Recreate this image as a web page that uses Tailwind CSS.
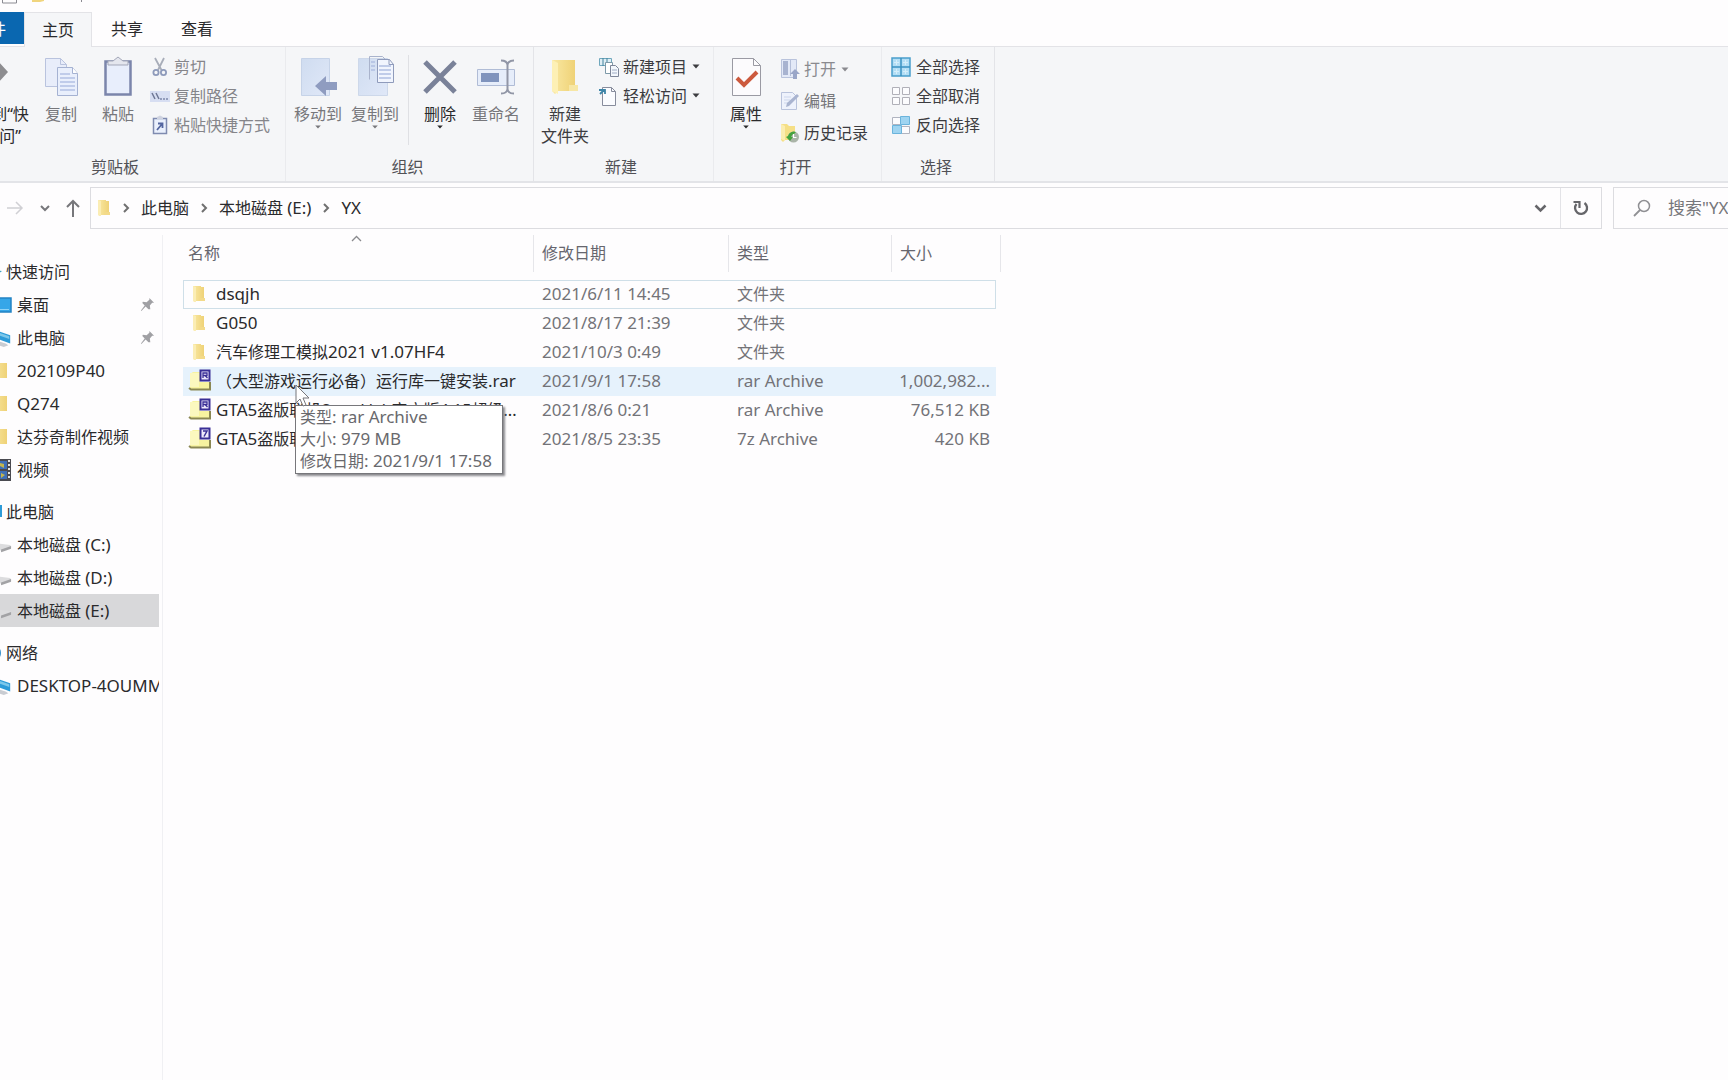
<!DOCTYPE html>
<html lang="zh-CN">
<head>
<meta charset="utf-8">
<meta name="viewport" content="width=device-width, initial-scale=1">
<title>YX</title>
<script src="https://cdn.jsdelivr.net/npm/@tailwindcss/browser@4"></script>
</head>
<body class="bg-[#fefdfe]">
<svg class="absolute size-0" aria-hidden="true">
  <defs>
    <linearGradient id="gFolder" x1="0" x2="1"><stop offset="0" stop-color="#f9e8a2"/><stop offset="1" stop-color="#efd277"/></linearGradient>
    <linearGradient id="gPage" x1="0" y1="0" x2="1" y2="1"><stop offset="0" stop-color="#cfdcf0"/><stop offset="1" stop-color="#e0e8f8"/></linearGradient>
  </defs>
  <symbol id="folder" viewBox="0 0 14 18"><path d="M1 1h8v1h3v14H4l-1 1-2-1z" fill="url(#gFolder)"/><path d="M1 1l3 1v15l-3-1z" fill="#fbedb4"/><path d="M8 13h5v3H8z" fill="#f3da8a"/></symbol>
  <symbol id="caret" viewBox="0 0 8 5"><path d="M0.500 0.500h7L4 4.500z" fill="currentColor"/></symbol>
  <symbol id="chev" viewBox="0 0 8 12"><path d="M2 2l4 4-4 4" fill="none" stroke="#707070" stroke-width="2"/></symbol>
  <symbol id="pin" viewBox="0 0 16 16"><path d="M10 1l5 5-2 0-2.500 3 .500 4-2 0-3-3L1.500 15 1 14.500 5 9 2.500 6.500 3 5l4 .500L10 3z" fill="#a0a0a4"/></symbol>
  <symbol id="drive" viewBox="0 0 22 16"><path d="M2 6l18 2 1 2-9 5L1 11z" fill="#dcdcde"/><path d="M10 13l11-4v3l-11 4z" fill="#a2a2a5"/></symbol>
  <symbol id="pc" viewBox="0 0 22 20"><path d="M3 1l17 6v9L3 10z" fill="#2d9bd8"/><path d="M4 3l15 5v3L4 6z" fill="#7cc7ea"/><path d="M1 12l14 4 3 2-5 2L1 16z" fill="#c9ccd2"/></symbol>
  <symbol id="rar" viewBox="0 0 24 22"><path d="M2 5l3-2h7v13h9v4H3l-1-1z" fill="#f7f3a0"/><path d="M2 4h9v14H2z" fill="#fbf8bf"/><path d="M11 13h10v6H11z" fill="#f7f3a0"/><path d="M1 19l2 1.500h19V13" fill="none" stroke="#8a8752" stroke-width="2"/><path d="M12.500 1.500h9v10h-9z" fill="#efeafc" stroke="#3a2f96" stroke-width="2"/></symbol>
</svg>

<div class="flex min-h-screen flex-col overflow-hidden font-['Noto_Sans','Noto_Sans_CJK_SC',sans-serif] text-[16px] leading-[22px] text-[#2a2a2c]">

  <!-- Quick access strip -->
  <div class="flex h-3 items-start">
    <svg class="h-1 w-[90px]" viewBox="0 0 90 4"><path d="M2.500 0v3h14V0" fill="none" stroke="#8b8b92"/><path d="M32 0h12v1l-4 1h-8z" fill="#f0d57e"/><path d="M81.500 0v2" stroke="#8b8b92"/></svg>
  </div>

  <!-- Tabs -->
  <nav class="flex h-[35px] border-b border-[#e3e3e7]">
    <button class="h-8 w-6 overflow-hidden border-t border-[#0a67b0] bg-[#0a67b0] text-white"><span class="-ml-[26px] block w-8 whitespace-nowrap">文件</span></button>
    <button class="-mb-px h-[35px] w-[68px] border-x border-t border-[#e3e3e7] bg-[#f5f6f8]">主页</button>
    <button class="h-[34px] w-[70px]">共享</button>
    <button class="h-[34px] w-[70px]">查看</button>
  </nav>

  <!-- Ribbon -->
  <div class="flex h-[136px] border-b-2 border-[#e3e4e8] bg-[#f5f6f8]">
    <section class="flex w-[286px] flex-col border-r border-[#eaebee]">
      <div class="flex flex-1 pt-2">
        <button class="-ml-[44px] flex w-[76px] flex-none flex-col items-center whitespace-nowrap leading-[22px]">
          <svg class="mb-1 h-11 w-[76px]" viewBox="0 0 76 44"><path d="M30 12h12v-6l10 11-10 11v-6H30z" fill="#8d8d90"/></svg>
          <span>固定到“快</span><span>速访问”</span>
        </button>
        <button class="flex w-[58px] flex-col items-center text-[#77777b]">
          <svg class="mb-1 h-11 w-10" viewBox="0 0 40 44"><path d="M4.500 3.500h15l6 6v22h-21z" fill="#e8edfa" stroke="#b9c3de"/><path d="M19.500 3.500v6h6" fill="none" stroke="#b9c3de"/><path d="M16.500 12.500h15l5 6v22h-20z" fill="#e9effc" stroke="#a5b2d2"/><path d="M31.500 12.500v6h5" fill="#fff" stroke="#a5b2d2"/><path d="M19 19h10M19 23h15M19 27h15M19 31h15M19 35h15" stroke="#b3c1e4" stroke-width="1.500"/></svg>
          复制
        </button>
        <button class="flex w-[56px] flex-col items-center text-[#77777b]">
          <svg class="mb-1 h-11 w-10" viewBox="0 0 40 44"><path d="M7.500 6.500h25v33h-25z" fill="#e8eefc" stroke="#7b85ab" stroke-width="2.500"/><path d="M10 10V6h5l5-4 5 4h5v4z" fill="#e4e6ee" stroke="#a3a7b8"/></svg>
          粘贴
        </button>
        <div class="ml-1 flex flex-col text-[#85858a]">
          <button class="flex h-[29px] items-center gap-1 pb-1.5"><svg class="size-5" viewBox="0 0 20 20"><path d="M5 1l7 13M14 1L8 13" stroke="#a8adb9" stroke-width="1.800"/><circle cx="6" cy="15.500" r="2.600" fill="none" stroke="#8e9bbb" stroke-width="1.800"/><circle cx="13.500" cy="15.500" r="2.600" fill="none" stroke="#8e9bbb" stroke-width="1.800"/></svg>剪切</button>
          <button class="flex h-[29px] items-center gap-1 pb-1.5"><svg class="size-5" viewBox="0 0 20 20"><path d="M0 5h20v11H0z" fill="#d7def2"/><path d="M2 7l3 6M6 7l3 6" stroke="#6f7896" stroke-width="1.500"/><path d="M10 13h8" stroke="#7d88ab" stroke-width="1.500" stroke-dasharray="2 1"/></svg>复制路径</button>
          <button class="flex h-[29px] items-center gap-1 pb-1.5"><svg class="size-5" viewBox="0 0 20 20"><path d="M3.500 3.500h13v15h-13z" fill="#eaf0fd" stroke="#7f8bb0" stroke-width="1.500"/><path d="M7 4V2l3-1.500L13 2v2z" fill="#cfd3e0"/><path d="M7 15l5-6M8 8.500h4.500V13" fill="none" stroke="#5466a0" stroke-width="1.800"/></svg>粘贴快捷方式</button>
        </div>
      </div>
      <h2 class="h-[25px] pl-[91px] text-[#515156]">剪贴板</h2>
    </section>

    <section class="flex w-[248px] flex-col border-r border-[#e3e4e8]">
      <div class="flex flex-1 pl-1 pt-2">
        <button class="flex w-[56px] flex-col items-center text-[#77777b]">
          <svg class="mb-1 h-11 w-10" viewBox="0 0 40 44"><path d="M3.500 3.500h28v37h-28z" fill="url(#gPage)" stroke="#c6d3e8"/><path d="M17 31l11-10v6h11v8H28v6z" fill="#8f9cc0"/></svg>
          移动到<svg class="h-1 w-2" viewBox="0 0 8 5"><use href="#caret"/></svg>
        </button>
        <button class="flex w-[58px] flex-col items-center text-[#77777b]">
          <svg class="mb-1 h-11 w-10" viewBox="0 0 40 44"><path d="M3.500 3.500h29v37h-29z" fill="url(#gPage)" stroke="#cdd8ea"/><path d="M14.500 24.500v-23h13l4 4" fill="none" stroke="#a9b3cc"/><path d="M22.500 4.500h12l4 5v18h-16z" fill="#f1f5fe" stroke="#8f9bbb"/><path d="M34 4.500v5h5" fill="none" stroke="#8f9bbb"/><path d="M24 11h12M24 15h12M24 19h12M24 23h12M16 7h4M16 11h4M16 15h4" stroke="#b0bfe2" stroke-width="1.500"/></svg>
          复制到<svg class="h-1 w-2" viewBox="0 0 8 5"><use href="#caret"/></svg>
        </button>
        <div class="ml-1 h-[90px] w-px bg-[#dfe0e4]"></div>
        <button class="ml-[3px] flex w-[56px] flex-col items-center">
          <svg class="mb-1 h-11 w-10" viewBox="0 0 40 44"><path d="M5 7l30 30M35 7L5 37" stroke="#7a8299" stroke-width="5"/></svg>
          删除<svg class="h-1 w-2" viewBox="0 0 8 5"><use href="#caret"/></svg>
        </button>
        <button class="flex w-[56px] flex-col items-center text-[#77777b]">
          <svg class="mb-1 h-11 w-10" viewBox="0 0 40 44"><path d="M1.500 14.500h37v16h-37z" fill="#e6edfa" stroke="#b0bcd6"/><path d="M5 18h18v9H5z" fill="#7f93bd"/><path d="M25 5.500q6 0 6.500 4.500Q32 5.500 38 5.500M25 38.500q6 0 6.500-4.500 0.500 4.500 6.500 4.500M31.500 9v26" fill="none" stroke="#9196a6" stroke-width="2"/></svg>
          重命名
        </button>
      </div>
      <h2 class="h-[25px] pr-1 text-center text-[#515156]">组织</h2>
    </section>

    <section class="flex w-[180px] flex-col border-r border-[#eaebee]">
      <div class="flex flex-1 pt-2">
        <button class="flex w-[62px] flex-col items-center text-[#3c3c40]">
          <svg class="mb-1 h-11 w-10" viewBox="0 0 40 44"><path d="M7 5h23v31H13l-3 3-3-3z" fill="url(#gFolder)"/><path d="M7 5l6 3v31l-6-3z" fill="#fdf0b5"/><path d="M24 30h9v6h-9z" fill="#f7e7a6"/></svg>
          <span>新建</span><span>文件夹</span>
        </button>
        <div class="ml-[3px] flex flex-col text-[#3c3c40]">
          <button class="flex h-[29px] items-center gap-1 pb-1.5"><svg class="size-5" viewBox="0 0 20 20"><path d="M0.500 1.500h12v7h-12z" fill="#dfeef5" stroke="#6fa7bd"/><path d="M4 1v8M8 1v8" stroke="#43839d"/><path d="M6.500 5.500h7v11h-7z" fill="#fff" stroke="#7d99a8"/><path d="M11.500 8.500h5l3 3v8h-8z" fill="#f3f7fc" stroke="#7e8699"/><path d="M13 13h5M13 16h5" stroke="#a0acc4"/></svg>新建项目<svg class="ml-px h-[5px] w-2"><use href="#caret"/></svg></button>
          <button class="flex h-[29px] items-center gap-1 pb-1.5"><svg class="size-5" viewBox="0 0 20 20"><path d="M3.500 1.500h9l4 4v14h-13z" fill="#fbfcff" stroke="#878c9c"/><path d="M12.500 1.500v4h4" fill="none" stroke="#878c9c"/><path d="M0 4h6v4M1 8l4-4" fill="none" stroke="#3e85a8" stroke-width="1.800"/></svg>轻松访问<svg class="ml-px h-[5px] w-2"><use href="#caret"/></svg></button>
        </div>
      </div>
      <h2 class="h-[25px] pl-[71px] text-[#515156]">新建</h2>
    </section>

    <section class="flex w-[168px] flex-col border-r border-[#eaebee]">
      <div class="flex flex-1 pl-1 pt-2">
        <button class="flex w-[56px] flex-col items-center">
          <svg class="mb-1 h-11 w-10" viewBox="0 0 40 44"><path d="M6.500 3.500h21l7 7v30h-28z" fill="#fcfbfd" stroke="#9a9aa3"/><path d="M27.500 3.500v7h7" fill="none" stroke="#9a9aa3"/><path d="M11 23l7 7 13-13" fill="none" stroke="#cc5a3e" stroke-width="4"/></svg>
          属性<svg class="h-1 w-2" viewBox="0 0 8 5"><use href="#caret"/></svg>
        </button>
        <div class="ml-[6px] flex flex-col text-[#3c3c40]">
          <button class="flex h-8 items-center gap-1 pb-1 text-[#8a8a8f]"><svg class="size-5" viewBox="0 0 20 20"><path d="M1.500 0.500h15v18h-15z" fill="#e3e9f7" stroke="#b9c3dc"/><path d="M3 2h5v14H3z" fill="#a8b3d0"/><path d="M10.500 1v16" stroke="#b5bfd9"/><path d="M15 10l5 5h-3v5h-4v-5h-3z" fill="#9aa6c8"/></svg>打开<svg class="ml-px h-[5px] w-2"><use href="#caret"/></svg></button>
          <button class="flex h-8 items-center gap-1 pb-1 text-[#77777b]"><svg class="size-5" viewBox="0 0 20 20"><path d="M1.500 1.500h11l4 4v13h-15z" fill="#eef2fc" stroke="#b9c3dc"/><path d="M4 6h7M4 9h6M4 12h4" stroke="#cdd6ec"/><path d="M6 16l1-4L17 3l2 2L9 15z" fill="#a9b4d0"/></svg>编辑</button>
          <button class="flex h-8 items-center gap-1 pb-1"><svg class="size-5" viewBox="0 0 20 20"><path d="M1 1h6l2 2h6v14H5l-2 2-2-2z" fill="#f5df86"/><path d="M1 1l4 2v15l-4-2z" fill="#fbedb0"/><circle cx="13.500" cy="14" r="5.500" fill="#aab4a8"/><path d="M8 13a6 6 0 0 1 8-4l-2 2a4 4 0 0 0-3 3h2l-3 4-4-4z" fill="#45a33d"/><path d="M13.500 11v3.500h3" fill="none" stroke="#fff" stroke-width="1.200"/></svg>历史记录</button>
        </div>
      </div>
      <h2 class="h-[25px] pr-1 text-center text-[#515156]">打开</h2>
    </section>

    <section class="flex w-[113px] flex-col border-r border-[#e3e4e8]">
      <div class="flex flex-1 flex-col pl-[9px] pt-2 text-[#3c3c40]">
        <button class="flex h-[29px] items-center gap-[5px] pb-1.5"><svg class="size-5" viewBox="0 0 20 20"><path d="M1 1h18v18H1z" fill="#b3def5" stroke="#4a9fcb" stroke-width="1.500"/><path d="M10 1v18M1 10h18" stroke="#3b93c2" stroke-width="1.500"/><path d="M5.500 3v5M3 5.500h5M14.500 3v5M12 5.500h5M5.500 12v5M3 14.500h5M14.500 12v5M12 14.500h5" stroke="#d4eefb"/></svg>全部选择</button>
        <button class="flex h-[29px] items-center gap-[5px] pb-1.5"><svg class="size-5" viewBox="0 0 20 20"><path d="M1.500 1.500h7v7h-7zM11.500 1.500h7v7h-7zM1.500 11.500h7v7h-7zM11.500 11.500h7v7h-7z" fill="#fcfcfe" stroke="#b0b0b8"/></svg>全部取消</button>
        <button class="flex h-[29px] items-center gap-[5px] pb-1.5"><svg class="size-5" viewBox="0 0 20 20"><path d="M1.500 2.500h8v7h-8zM10.500 11.500h8v7h-8z" fill="#fcfcfe" stroke="#b0b4c0"/><path d="M9.500 1.500h9v8h-9zM1.500 10.500h9v8h-9z" fill="#9fd4f1" stroke="#6bb4dc"/></svg>反向选择</button>
      </div>
      <h2 class="h-[25px] pr-1 text-center text-[#515156]">选择</h2>
    </section>
  </div>

  <!-- Address bar -->
  <div class="flex h-[52px] items-start pt-1">
    <div class="flex h-[42px] w-[90px] flex-none items-center">
      <button aria-label="前进" class="ml-1.5"><svg class="h-4 w-[18px]" viewBox="0 0 18 16"><path d="M1 8h15M10 2l6 6-6 6" fill="none" stroke="#d0d0d4" stroke-width="1.500"/></svg></button>
      <button aria-label="最近" class="ml-4"><svg class="h-[7px] w-[10px]" viewBox="0 0 10 7"><path d="M1 1l4 4 4-4" fill="none" stroke="#77777b" stroke-width="2"/></svg></button>
      <button aria-label="向上" class="ml-4"><svg class="h-[18px] w-[14px]" viewBox="0 0 14 18"><path d="M7 18V2M1 8l6-6 6 6" fill="none" stroke="#77777b" stroke-width="2"/></svg></button>
    </div>
    <div class="flex h-[42px] flex-1 items-center border border-[#dcdce0]">
      <svg class="ml-[6px] h-[18px] w-[14px]"><use href="#folder"/></svg>
      <svg class="mx-[11px] h-3 w-2"><use href="#chev"/></svg>
      <a href="#">此电脑</a>
      <svg class="mx-[11px] h-3 w-2"><use href="#chev"/></svg>
      <a href="#">本地磁盘 <span class="text-[17px]">(E:)</span></a>
      <svg class="mx-[11px] h-3 w-2"><use href="#chev"/></svg>
      <a href="#" class="text-[17px]">YX</a>
      <button aria-label="历史" class="ml-auto mr-[13px]"><svg class="h-[9px] w-[13px]" viewBox="0 0 13 9"><path d="M1.500 1.500l5 5 5-5" fill="none" stroke="#66666a" stroke-width="2.500"/></svg></button>
      <button aria-label="刷新" class="flex h-10 w-[41px] items-center justify-center border-l border-[#e3e3e7]"><svg class="size-4" viewBox="0 0 16 16"><path d="M11.500 3A6 6 0 1 1 3.500 4" fill="none" stroke="#66666a" stroke-width="2.300"/><path d="M0.500 2h6v6" fill="none" stroke="#66666a" stroke-width="2.200"/></svg></button>
    </div>
    <label class="ml-[11px] -mr-[95px] flex h-[42px] w-[210px] flex-none items-center border border-[#dcdce0]">
      <svg class="ml-[19px] size-[18px] flex-none" viewBox="0 0 18 18"><circle cx="11" cy="7" r="5.500" fill="none" stroke="#909094" stroke-width="1.500"/><path d="M7 11l-6 6" stroke="#909094" stroke-width="1.800"/></svg>
      <input aria-label="搜索" placeholder="搜索&quot;YX&quot;" class="ml-[17px] min-w-0 flex-1 bg-transparent text-[17px] outline-none placeholder:text-[#77777b]">
    </label>
  </div>

  <div class="flex flex-1">
    <!-- Navigation pane -->
    <aside class="w-[163px] flex-none border-r border-[#f0f0f3] pr-[3px] pt-5">
      <ul class="flex flex-col gap-[9px] overflow-hidden whitespace-nowrap [&_a]:flex [&_a]:h-[33px] [&_a]:items-center">
        <li>
          <a href="#" class="pl-[6px]"><svg class="-ml-[22px] mr-1 size-[18px] flex-none" viewBox="0 0 18 18"><path d="M9 1l3 6 6 1-5 4 1 6-5-3-5 3 1-6-4-4 6-1z" fill="#3aa0c0"/></svg>快速访问</a>
          <a href="#"><svg class="-ml-2 mr-[5px] size-5 flex-none" viewBox="0 0 20 20"><path d="M1 3h18v14H1z" fill="#36a6e8" stroke="#2383c4" stroke-width="1.500"/><path d="M3 14.500h14" stroke="#8fd3f7"/></svg>桌面<svg class="ml-auto mr-1 size-[15px]" viewBox="0 0 16 16"><use href="#pin"/></svg></a>
          <a href="#"><svg class="-ml-2 mr-[5px] size-5 flex-none"><use href="#pc"/></svg>此电脑<svg class="ml-auto mr-1 size-[15px]" viewBox="0 0 16 16"><use href="#pin"/></svg></a>
          <a href="#" class="text-[17px]"><svg class="-ml-2 mr-[9px] h-[18px] w-4 flex-none" viewBox="0 0 16 18"><path d="M0 1h15v15H0z" fill="url(#gFolder)"/></svg>202109P40</a>
          <a href="#" class="text-[17px]"><svg class="-ml-2 mr-[9px] h-[18px] w-4 flex-none" viewBox="0 0 16 18"><path d="M0 1h15v15H0z" fill="url(#gFolder)"/></svg>Q274</a>
          <a href="#"><svg class="-ml-2 mr-[9px] h-[18px] w-4 flex-none" viewBox="0 0 16 18"><path d="M0 1h15v15H0z" fill="url(#gFolder)"/></svg>达芬奇制作视频</a>
          <a href="#"><svg class="-ml-2 mr-[5px] h-[22px] w-5 flex-none" viewBox="0 0 20 22"><path d="M0 0h19v22H0z" fill="#4a4a50"/><path d="M0 2h15v8H0zM0 12h15v8H0z" fill="#3f6fb5"/><path d="M8 4l4 1v4l-4-2zM9 14l4 2-4 3z" fill="#c4b64e"/><path d="M17 1v20" stroke="#e4e4e0" stroke-width="2" stroke-dasharray="2 2"/></svg>视频</a>
        </li>
        <li>
          <a href="#" class="pl-[6px]"><svg class="-ml-[24px] mr-1 h-4 w-5 flex-none" viewBox="0 0 20 16"><path d="M0 1h20v12H0z" fill="#2d9bd8"/></svg>此电脑</a>
          <a href="#"><svg class="-ml-2 mr-[5px] h-4 w-5 flex-none"><use href="#drive"/></svg><span>本地磁盘 <span class="text-[17px]">(C:)</span></span></a>
          <a href="#"><svg class="-ml-2 mr-[5px] h-4 w-5 flex-none"><use href="#drive"/></svg><span>本地磁盘 <span class="text-[17px]">(D:)</span></span></a>
          <a href="#" class="bg-[#d8d8da]"><svg class="-ml-2 mr-[5px] h-4 w-5 flex-none"><use href="#drive"/></svg><span>本地磁盘 <span class="text-[17px]">(E:)</span></span></a>
        </li>
        <li>
          <a href="#" class="pl-[6px]"><svg class="-ml-[22px] mr-1 size-[18px] flex-none" viewBox="0 0 18 18"><circle cx="9" cy="9" r="8" fill="#3590cc"/></svg>网络</a>
          <a href="#" class="text-[17px]"><svg class="-ml-2 mr-[5px] size-5 flex-none"><use href="#pc"/></svg>DESKTOP-4OUMMVB</a>
        </li>
      </ul>
    </aside>

    <!-- File list -->
    <main class="relative flex-1 pl-5">
      <table class="w-[818px] table-fixed border-separate border-spacing-0 whitespace-nowrap text-left text-[#737378] [&_td]:h-[29px] [&_td]:border-y [&_td]:border-transparent [&_td]:p-0 [&_td]:pb-0.5 [&_td]:leading-[22px]">
        <colgroup><col class="w-[351px]"><col class="w-[195px]"><col class="w-[163px]"><col class="w-[104px]"><col class="w-[5px]"></colgroup>
        <thead>
          <tr class="[&_th]:h-[45px] [&_th]:p-0 [&_th]:align-top [&_th]:font-normal [&_div]:h-[37px] [&_div]:border-r [&_div]:border-[#e6e6ea] [&_div]:pt-[7px] text-[#66666e]">
            <th class="relative"><div class="pl-[5px]">名称</div><svg class="absolute left-[168px] top-0 h-[7px] w-[11px]" viewBox="0 0 11 7"><path d="M1 6l4.500-4.500L10 6" fill="none" stroke="#8a8a8e" stroke-width="1.300"/></svg></th>
            <th><div class="pl-2">修改日期</div></th>
            <th><div class="pl-2">类型</div></th>
            <th colspan="2"><div class="pl-2">大小</div></th>
          </tr>
        </thead>
        <tbody class="text-[17px]">
          <tr class="[&_td:not(:last-child)]:border-[#cfdfe8]">
            <td class="border-l"><div class="flex items-center pl-[8px] text-[#2a2a2c]"><svg class="mr-[10px] h-[18px] w-[14px]"><use href="#folder"/></svg>dsqjh</div></td>
            <td><div class="pl-2">2021/6/11 14:45</div></td><td><div class="pl-2 text-[16px]">文件夹</div></td><td class="border-r"></td><td></td>
          </tr>
          <tr>
            <td><div class="flex items-center pl-[9px] text-[#2a2a2c]"><svg class="mr-[10px] h-[18px] w-[14px]"><use href="#folder"/></svg>G050</div></td>
            <td><div class="pl-2">2021/8/17 21:39</div></td><td><div class="pl-2 text-[16px]">文件夹</div></td><td></td><td></td>
          </tr>
          <tr>
            <td><div class="flex items-center pl-[9px] text-[#2a2a2c]"><svg class="mr-[10px] h-[18px] w-[14px]"><use href="#folder"/></svg><span><span class="text-[16px]">汽车修理工模拟</span>2021 v1.07HF4</span></div></td>
            <td><div class="pl-2">2021/10/3 0:49</div></td><td><div class="pl-2 text-[16px]">文件夹</div></td><td></td><td></td>
          </tr>
          <tr class="[&_td:not(:last-child)]:bg-[#e6f2fc]">
            <td><div class="flex h-[22px] items-center pl-[5px] text-[#2a2a2c]"><svg class="mb-0.5 mr-1 h-[22px] w-6 flex-none" viewBox="0 0 24 22"><use href="#rar"/><path d="M15 9V4h4v2.500h-4M17 6.500L19.500 9" fill="none" stroke="#3a2f96" stroke-width="1.300"/></svg><span><span class="text-[16px]">（大型游戏运行必备）运行库一键安装</span>.rar</span></div></td>
            <td><div class="pl-2">2021/9/1 17:58</div></td><td><div class="pl-2">rar Archive</div></td><td><div class="pr-[6px] text-right">1,002,982...</div></td><td></td>
          </tr>
          <tr>
            <td><div class="flex h-[22px] items-center pl-[5px] pr-4 text-[#2a2a2c]"><svg class="mb-0.5 mr-1 h-[22px] w-6 flex-none" viewBox="0 0 24 22"><use href="#rar"/><path d="M15 9V4h4v2.500h-4M17 6.500L19.500 9" fill="none" stroke="#3a2f96" stroke-width="1.300"/></svg><span class="min-w-0 truncate">GTA5<span class="text-[16px]">盗版联机Smod lab官方版4.15超级整合包，完整版</span></span></div></td>
            <td><div class="pl-2">2021/8/6 0:21</div></td><td><div class="pl-2">rar Archive</div></td><td><div class="pr-[6px] text-right">76,512 KB</div></td><td></td>
          </tr>
          <tr>
            <td><div class="flex h-[22px] items-center pl-[5px] text-[#2a2a2c]"><svg class="mb-0.5 mr-1 h-[22px] w-6 flex-none" viewBox="0 0 24 22"><use href="#rar"/><path d="M15 4h4l-3 5.500" fill="none" stroke="#3a2f96" stroke-width="1.500"/></svg><span>GTA5<span class="text-[16px]">盗版联机</span>.7z</span></div></td>
            <td><div class="pl-2">2021/8/5 23:35</div></td><td><div class="pl-2">7z Archive</div></td><td><div class="pr-[6px] text-right">420 KB</div></td><td></td>
          </tr>
        </tbody>
      </table>

      <div role="tooltip" class="absolute left-[132px] top-[170px] h-[69px] w-[208px] whitespace-nowrap border border-[#77777b] bg-white pl-1 text-[17px] leading-[22px] text-[#69696d] shadow-[2px_2px_2px_#8a8a8e]">
        <div><span class="text-[16px]">类型</span>: rar Archive</div>
        <div><span class="text-[16px]">大小</span>: 979 MB</div>
        <div><span class="text-[16px]">修改日期</span>: 2021/9/1 17:58</div>
      </div>
      <svg class="absolute left-[132px] top-[149px] h-6 w-4" viewBox="0 0 16 24"><path d="M1 1v18l4-4 3 7 3-1-3-7h6z" fill="#fff" stroke="#77777b"/></svg>
    </main>
  </div>
</div>
</body>
</html>
